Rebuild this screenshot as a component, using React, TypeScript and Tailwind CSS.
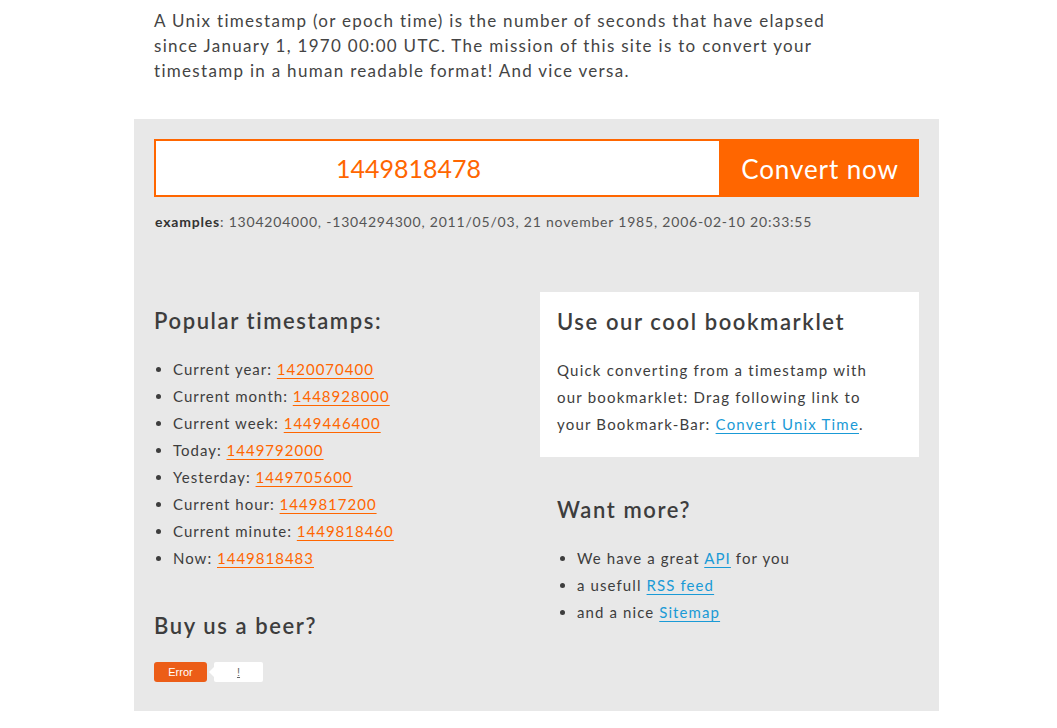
import React from "react";

const popular: [string, string][] = [
  ["Current year", "1420070400"],
  ["Current month", "1448928000"],
  ["Current week", "1449446400"],
  ["Today", "1449792000"],
  ["Yesterday", "1449705600"],
  ["Current hour", "1449817200"],
  ["Current minute", "1449818460"],
  ["Now", "1449818483"],
];

export default function App() {
  return (
    <div className="w-[1057px] min-h-[728px] bg-white font-['Lato',sans-serif] text-[#444444]">
      <div className="w-[805px] ml-[134px]">
        <p className="px-5 pt-[8px] text-[17px] leading-[25px] tracking-[1.3px] text-[#444]">
          A Unix timestamp (or epoch time) is the number of seconds that have elapsed
          <br />
          since January 1, 1970 00:00 UTC. The mission of this site is to convert your
          <br />
          timestamp in a human readable format! And vice versa.
        </p>

        <div className="mt-[36px] bg-[#e8e8e8] px-5 pt-5 pb-[29px]">
          <div className="flex h-[58px]">
            <div className="flex w-[567px] items-center justify-center border-2 border-[#ff6600] bg-white pr-[58px] pt-[2px] text-[25px] text-[#ff6600] tracking-[0px]">
              1449818478
            </div>
            <button className="flex w-[198px] items-center justify-center bg-[#ff6600] pt-[2px] text-[26px] text-white tracking-[0.9px]">
              Convert now
            </button>
          </div>
          <p className="mt-[15px] pl-[1px] text-[14px] leading-[20px] tracking-[0.8px] text-[#555]">
            <span className="font-bold text-[#333]">examples</span>: 1304204000, -1304294300, 2011/05/03, 21 november 1985, 2006-02-10 20:33:55
          </p>

          <div className="mt-[60px] grid grid-cols-[366px_379px] gap-5">
            <div className="pt-[14px]">
              <h2 className="text-[22px] leading-[30px] font-semibold tracking-[1.6px] text-[#3d3d3d]">
                Popular timestamps:
              </h2>
              <ul className="mt-[20px] list-disc pl-[19px] text-[15px] leading-[27px] tracking-[1px] text-[#3d3d3d]">
                {popular.map(([label, ts]) => (
                  <li key={label}>
                    {label}:{" "}
                    <a className="text-[#ff6600] underline underline-offset-[3px]" href="#">
                      {ts}
                    </a>
                  </li>
                ))}
              </ul>
              <h2 className="mt-[39px] text-[22px] leading-[30px] font-semibold tracking-[1.6px] text-[#3d3d3d]">
                Buy us a beer?
              </h2>
              <div className="mt-[21px] flex h-[20px] items-center">
                <div className="flex h-[20px] w-[53px] items-center justify-center rounded-[3px] bg-[#ec5d17] font-['Liberation_Sans',sans-serif] text-[11px] text-white">
                  Error
                </div>
                <div className="relative ml-[7px] flex h-[20px] w-[49px] items-center justify-center rounded-[2px] bg-white font-['Liberation_Sans',sans-serif] text-[11px] text-[#666]">
                  <span className="absolute left-[-5px] top-[5px] h-0 w-0 border-y-[5px] border-r-[5px] border-y-transparent border-r-white" />
                  <span className="underline">!</span>
                </div>
              </div>
            </div>

            <div>
              <div className="bg-white px-[17px] pt-[15px] pb-[19px]">
                <h2 className="text-[22px] leading-[30px] font-semibold tracking-[1.6px] text-[#3d3d3d]">
                  Use our cool bookmarklet
                </h2>
                <p className="mt-[20px] text-[15px] leading-[27px] tracking-[1.2px] text-[#3d3d3d]">
                  Quick converting from a timestamp with
                  <br />
                  our bookmarklet: Drag following link to
                  <br />
                  your Bookmark-Bar:{" "}
                  <a className="text-[#1a9ad6] underline underline-offset-[3px]" href="#">
                    Convert Unix Time
                  </a>
                  .
                </p>
              </div>
              <div className="px-[17px]">
                <h2 className="mt-[38px] text-[22px] leading-[30px] font-semibold tracking-[1.6px] text-[#3d3d3d]">
                  Want more?
                </h2>
                <ul className="mt-[20px] list-disc pl-[20px] text-[15px] leading-[27px] tracking-[1.1px] text-[#3d3d3d]">
                  <li>
                    We have a great{" "}
                    <a className="text-[#1a9ad6] underline underline-offset-[3px]" href="#">API</a> for you
                  </li>
                  <li>
                    a usefull{" "}
                    <a className="text-[#1a9ad6] underline underline-offset-[3px]" href="#">RSS feed</a>
                  </li>
                  <li>
                    and a nice{" "}
                    <a className="text-[#1a9ad6] underline underline-offset-[3px]" href="#">Sitemap</a>
                  </li>
                </ul>
              </div>
            </div>
          </div>
        </div>
      </div>
    </div>
  );
}
